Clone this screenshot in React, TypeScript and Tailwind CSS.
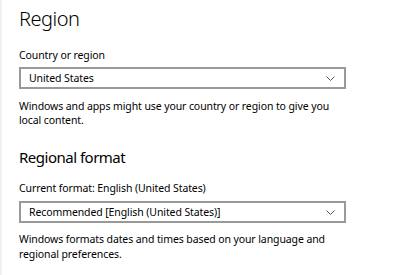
import React from "react";

const font = { fontFamily: '"Noto Sans", "Open Sans", sans-serif' };

function Chevron() {
  return (
    <svg width="9" height="5" viewBox="0 0 9 5" className="shrink-0">
      <path d="M0.5 0.5 L4.5 4.5 L8.5 0.5" fill="none" stroke="#555" strokeWidth="1" />
    </svg>
  );
}

function Combo({ text }: { text: string }) {
  return (
    <div className="flex h-[22px] w-[327px] items-center justify-between border-2 border-[#999999] bg-white pl-[8px] pr-[9px]">
      <span className="text-[10.5px] leading-none tracking-[-0.1px] text-black">{text}</span>
      <Chevron />
    </div>
  );
}

export default function App() {
  return (
    <div className="flex h-[275px] w-[399px] overflow-hidden bg-white text-black" style={font}>
      <div className="h-full w-[2px] bg-[#f0f0f0]" />
      <div className="flex flex-col pl-[17px]">
        <div className="mt-[7px] h-[24px] text-[20px] font-light leading-[24px] tracking-[-0.5px]">Region</div>
        <div className="mt-[17px] h-[14px] text-[10.5px] leading-[14px] tracking-[-0.1px]">Country or region</div>
        <div className="mt-[5px]">
          <Combo text="United States" />
        </div>
        <div className="mt-[10px] text-[10.5px] leading-[14px] tracking-[-0.1px]">
          Windows and apps might use your country or region to give you
          <br />
          local content.
        </div>
        <div className="mt-[20px] h-[20px] text-[15px] leading-[20px] tracking-[-0.5px]">Regional format</div>
        <div className="mt-[14px] h-[14px] text-[10.5px] leading-[14px] tracking-[-0.1px]">Current format: English (United States)</div>
        <div className="mt-[6px]">
          <Combo text="Recommended [English (United States)]" />
        </div>
        <div className="mt-[9px] text-[10.5px] leading-[15px] tracking-[-0.1px]">
          Windows formats dates and times based on your language and
          <br />
          regional preferences.
        </div>
      </div>
    </div>
  );
}
